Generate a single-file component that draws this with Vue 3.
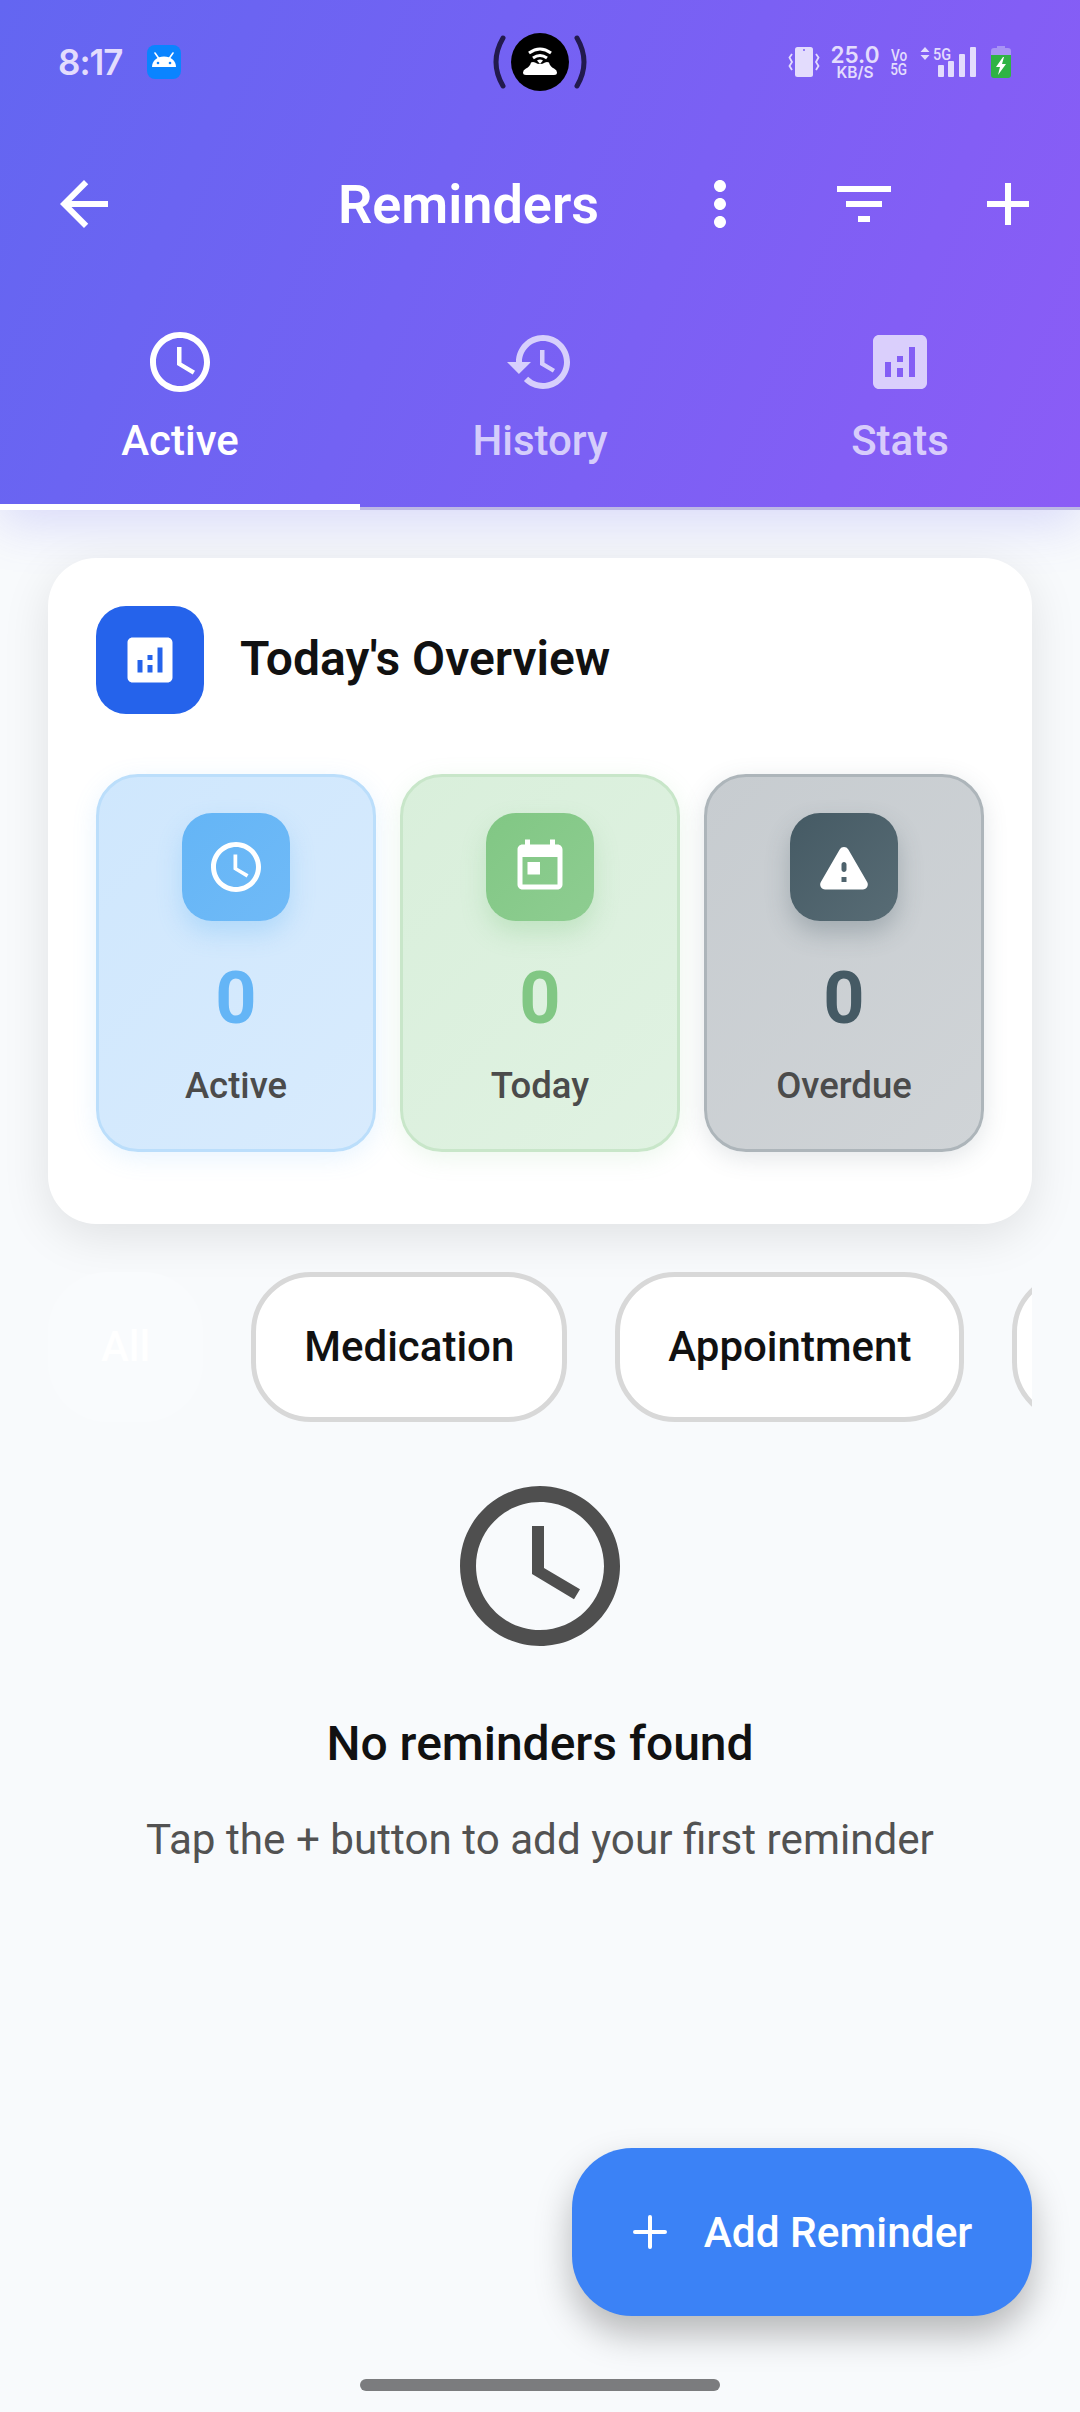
<template>
  <div class="page">
    <header class="top">
      <div class="status">
        <div class="status-left">
          <span class="clock">8:17</span>
          <svg class="droid" viewBox="0 0 34 34">
            <rect width="34" height="34" rx="8" fill="#0a84ff" />
            <path d="M8 8l3.5 5M26 8l-3.5 5" stroke="#fff" stroke-width="1.6" stroke-linecap="round" />
            <path d="M5 22c0-6 5-10.500 12-10.500S29 16 29 22z" fill="#fff" />
            <circle cx="11" cy="18" r="1.3" fill="#0a84ff" />
            <circle cx="23" cy="18" r="1.3" fill="#0a84ff" />
          </svg>
        </div>
        <svg class="cutout" viewBox="0 0 96 60">
          <path d="M11 6Q-3 30 11 54" fill="none" stroke="#221a4d" stroke-width="5" stroke-linecap="round" />
          <path d="M85 6Q99 30 85 54" fill="none" stroke="#221a4d" stroke-width="5" stroke-linecap="round" />
          <circle cx="48" cy="30" r="29" fill="#000" />
          <path d="M37 21q11-8 22 0M41 26q7-5 14 0" fill="none" stroke="#fff" stroke-width="3" />
          <path d="M45 28.500q3-2 6 0l-3 3.500z" fill="#fff" />
          <path d="M39 30.500q2-1 4 0q5 3 10 0q2-1 4 0q1 4 5 6q3 1.500 3 4q0 2.500-3 2.500H34q-3 0-3-2.500q0-2.500 3-4q4-2 5-6z" fill="#fff" />
        </svg>
        <div class="status-right">
          <svg class="vib" viewBox="0 0 32 30">
            <rect x="7" y="0" width="18" height="30" rx="2.500" fill="#e3dcfd" />
            <circle cx="16" cy="3" r="1" fill="#7a62f3" />
            <path d="M4 7L1.500 10.500 4 15 1.500 19 4 23M28 7l2.500 3.500L28 15l2.500 4L28 23" fill="none" stroke="#e3dcfd" stroke-width="1.800" />
          </svg>
          <div class="speed"><b>25.0</b><small>KB/S</small></div>
          <div class="volte"><span>Vo</span><span>5G</span></div>
          <div class="net">
            <svg class="updown" viewBox="0 0 10 13"><path d="M5 0l4.500 5H.5zM5 13L.5 8h9z" fill="#e3dcfd" /></svg>
            <span class="five">5G</span>
            <svg class="bars" viewBox="0 0 38 30">
              <rect x="0" y="18" width="6" height="12" rx="1" fill="#e3dcfd" />
              <rect x="10" y="14" width="6" height="16" rx="1" fill="#e3dcfd" />
              <rect x="21" y="7" width="6" height="23" rx="1" fill="#e3dcfd" />
              <rect x="32" y="0" width="6" height="30" rx="1" fill="#e3dcfd" />
            </svg>
          </div>
          <svg class="batt" viewBox="0 0 20 32">
            <path d="M6 0h8v2h3q3 0 3 3v5H0V5q0-3 3-3h3z" fill="#a893f5" />
            <path d="M0 9h20v20q0 3-3 3H3q-3 0-3-3z" fill="#2fb344" />
            <path d="M12 11L5 21h4l-2 8 8-11h-4l2-7z" fill="#fff" />
          </svg>
        </div>
      </div>

      <div class="appbar">
        <svg class="icon back" viewBox="0 0 24 24"><path :d="icons.back" /></svg>
        <span class="title">Reminders</span>
        <div class="actions">
          <button class="act"><svg class="icon" viewBox="0 0 24 24"><path :d="icons.more" /></svg></button>
          <button class="act"><svg class="icon" viewBox="0 0 24 24"><path :d="icons.filter" /></svg></button>
          <button class="act"><svg class="icon" viewBox="0 0 24 24"><path :d="icons.add" /></svg></button>
        </div>
      </div>

      <nav class="tabs">
        <div v-for="t in tabs" :key="t.label" class="tab" :class="{ on: t.on }">
          <svg class="icon" viewBox="0 0 24 24"><path :d="t.icon" /></svg>
          <span>{{ t.label }}</span>
        </div>
      </nav>
    </header>

    <main class="body">
      <section class="card">
        <div class="card-head">
          <div class="head-icon"><svg viewBox="0 0 24 24"><path :d="icons.stats" /></svg></div>
          <h2>Today's Overview</h2>
        </div>
        <div class="tiles">
          <div v-for="s in stats" :key="s.label" class="tile" :class="s.cls">
            <div class="tile-icon"><svg viewBox="0 0 24 24"><path :d="s.icon" /></svg></div>
            <div class="num">0</div>
            <div class="lbl">{{ s.label }}</div>
          </div>
        </div>
      </section>

      <div class="chips">
        <div v-for="c in chips" :key="c" class="chip" :class="{ sel: c === 'All' }">{{ c }}</div>
      </div>

      <div class="empty">
        <svg viewBox="0 0 24 24"><path :d="icons.clock" /></svg>
        <h3>No reminders found</h3>
        <p>Tap the + button to add your first reminder</p>
      </div>
    </main>

    <button class="fab">
      <svg viewBox="0 0 36 36"><path d="M18 3v30M3 18h30" stroke="#fff" stroke-width="4" stroke-linecap="round" /></svg>
      <span>Add Reminder</span>
    </button>
    <div class="home"></div>
  </div>
</template>

<script setup>
const icons = {
  back: 'M20 11H7.83l5.59-5.59L12 4l-8 8 8 8 1.41-1.41L7.83 13H20v-2z',
  more: 'M12 8c1.1 0 2-.9 2-2s-.9-2-2-2-2 .9-2 2 .9 2 2 2zm0 2c-1.1 0-2 .9-2 2s.9 2 2 2 2-.9 2-2-.9-2-2-2zm0 6c-1.1 0-2 .9-2 2s.9 2 2 2 2-.9 2-2-.9-2-2-2z',
  filter: 'M10 18h4v-2h-4v2zM3 6v2h18V6H3zm3 7h12v-2H6v2z',
  add: 'M19 13h-6v6h-2v-6H5v-2h6V5h2v6h6v2z',
  clock: 'M11.99 2C6.47 2 2 6.48 2 12s4.47 10 9.99 10C17.52 22 22 17.52 22 12S17.52 2 11.99 2zM12 20c-4.42 0-8-3.58-8-8s3.58-8 8-8 8 3.58 8 8-3.58 8-8 8zm.5-13H11v6l5.25 3.15.75-1.23-4.5-2.67z',
  history: 'M13 3c-4.97 0-9 4.03-9 9H1l3.89 3.89.07.14L9 12H6c0-3.87 3.13-7 7-7s7 3.13 7 7-3.13 7-7 7c-1.93 0-3.68-.79-4.94-2.06l-1.42 1.42C8.27 19.99 10.51 21 13 21c4.97 0 9-4.03 9-9s-4.03-9-9-9zm-1 5v5l4.28 2.54.72-1.21-3.5-2.08V8H12z',
  stats: 'M19 3H5c-1.1 0-2 .9-2 2v14c0 1.1.9 2 2 2h14c1.1 0 2-.9 2-2V5c0-1.1-.9-2-2-2zM9 17H7v-5h2v5zm4 0h-2v-3h2v3zm0-5h-2v-2h2v2zm4 5h-2V7h2v10z',
  today: 'M19 3h-1V1h-2v2H8V1H6v2H5c-1.11 0-1.99.9-1.99 2L3 19c0 1.1.89 2 2 2h14c1.1 0 2-.9 2-2V5c0-1.1-.9-2-2-2zm0 16H5V8h14v11zM7 10h5v5H7z',
  warn: 'M4.47 21h15.06c1.54 0 2.5-1.67 1.73-3L13.73 4.99c-.77-1.33-2.69-1.33-3.46 0L2.74 18c-.77 1.33.19 3 1.73 3zM12 14c-.55 0-1-.45-1-1v-2c0-.55.45-1 1-1s1 .45 1 1v2c0 .55-.45 1-1 1zm1 4h-2v-2h2v2z'
}

const tabs = [
  { label: 'Active', icon: icons.clock, on: true },
  { label: 'History', icon: icons.history },
  { label: 'Stats', icon: icons.stats }
]

const stats = [
  { label: 'Active', icon: icons.clock, cls: 'blue' },
  { label: 'Today', icon: icons.today, cls: 'green' },
  { label: 'Overdue', icon: icons.warn, cls: 'grey' }
]

const chips = ['All', 'Medication', 'Appointment', 'Exercise']
</script>

<style>
html, body {
  margin: 0;
  background: #f8fafc;
}
</style>

<style scoped>
.page {
  position: relative;
  width: 1080px;
  height: 2412px;
  overflow: hidden;
  background: #f8fafc;
  font-family: Roboto, "Liberation Sans", sans-serif;
  color: #111;
}
.top {
  background: linear-gradient(112deg, #6366f1, #8b5cf6);
  box-shadow: 0 12px 48px rgba(99, 102, 241, 0.22);
  color: #fff;
}

/* status bar */
.status {
  position: relative;
  height: 126px;
  display: flex;
  align-items: center;
  justify-content: space-between;
  padding: 0 69px 2px 58px;
  box-sizing: border-box;
  color: #e3dcfd;
}
.status-left {
  display: flex;
  align-items: center;
  gap: 24px;
}
.clock {
  font-family: Inter, Roboto, sans-serif;
  font-size: 35px;
  font-weight: 600;
  letter-spacing: -1px;
}
.droid {
  width: 34px;
  height: 34px;
}
.cutout {
  position: absolute;
  left: 492px;
  top: 32px;
  width: 96px;
  height: 60px;
}
.status-right {
  display: flex;
  align-items: center;
}
.vib {
  width: 32px;
  height: 30px;
}
.speed {
  width: 48px;
  margin-left: 11px;
  display: flex;
  flex-direction: column;
  align-items: center;
  font-family: Inter, Roboto, sans-serif;
  line-height: 1;
}
.speed b {
  font-size: 22.5px;
  font-weight: 600;
}
.speed small {
  font-size: 15.5px;
  font-weight: 600;
  margin-top: -2px;
  white-space: nowrap;
}
.volte {
  width: 16px;
  margin-left: 12px;
  display: flex;
  flex-direction: column;
  align-items: center;
  font-size: 17px;
  font-weight: 500;
  line-height: 14px;
}
.volte span {
  transform: scaleX(0.8);
}
.net {
  position: relative;
  width: 56px;
  height: 30px;
  margin-left: 13px;
  display: flex;
  justify-content: flex-end;
}
.updown {
  position: absolute;
  left: 0;
  top: 0;
  width: 10px;
  height: 13px;
}
.five {
  position: absolute;
  left: 13px;
  top: -3px;
  font-size: 17px;
  font-weight: 500;
  transform: scaleX(0.85);
  transform-origin: left center;
}
.bars {
  width: 38px;
  height: 30px;
}
.batt {
  width: 20px;
  height: 32px;
  margin-left: 15px;
}

/* app bar */
.appbar {
  height: 156px;
  display: flex;
  align-items: center;
  padding-left: 48px;
}
.icon {
  width: 72px;
  height: 72px;
  fill: currentColor;
  display: block;
}
.title {
  margin-left: 218px;
  font-size: 54px;
  font-weight: 600;
  flex: 1;
}
.actions {
  display: flex;
}
.act {
  width: 144px;
  height: 144px;
  padding: 36px;
  border: 0;
  background: none;
  color: #fff;
}

/* tabs */
.tabs {
  display: flex;
  height: 228px;
}
.tab {
  flex: 1;
  box-sizing: border-box;
  display: flex;
  flex-direction: column;
  align-items: center;
  padding-top: 44px;
  border-bottom: 3px solid #bdb8e4;
  color: rgba(255, 255, 255, 0.7);
  font-size: 42px;
  font-weight: 500;
  line-height: 48px;
}
.tab span {
  margin-top: 19px;
}
.tab.on {
  color: #fff;
  border-bottom: 6px solid #fff;
}

/* overview card */
.body {
  padding: 48px 48px 0;
}
.card {
  background: #fff;
  border-radius: 48px;
  padding: 48px 48px 72px;
  box-shadow: 0 12px 48px rgba(0, 0, 0, 0.1);
}
.card-head {
  display: flex;
  align-items: center;
  gap: 36px;
}
.head-icon {
  width: 108px;
  height: 108px;
  border-radius: 30px;
  background: #2563eb;
  display: flex;
  align-items: center;
  justify-content: center;
}
.head-icon svg {
  width: 60px;
  height: 60px;
  fill: #fff;
}
.card-head h2 {
  margin: 0 0 3px;
  font-size: 48px;
  font-weight: 600;
  color: #111;
}
.tiles {
  display: flex;
  gap: 24px;
  margin-top: 60px;
}
.tile {
  flex: 1;
  height: 378px;
  box-sizing: border-box;
  border: 3px solid;
  border-radius: 42px;
  padding-top: 36px;
  display: flex;
  flex-direction: column;
  align-items: center;
}
.tile-icon {
  width: 108px;
  height: 108px;
  border-radius: 30px;
  display: flex;
  align-items: center;
  justify-content: center;
}
.tile-icon svg {
  width: 60px;
  height: 60px;
  fill: #fff;
}
.num {
  margin-top: 36px;
  font-size: 72px;
  font-weight: 700;
  line-height: 84px;
}
.lbl {
  margin-top: 21px;
  font-size: 36.5px;
  font-weight: 500;
  line-height: 48px;
  color: #4b4b4b;
}
.blue {
  background: linear-gradient(135deg, #cfe7fd, #d8ebfd);
  border-color: #bbdefb;
  box-shadow: 0 6px 24px rgba(100, 181, 246, 0.15);
}
.blue .tile-icon {
  background: linear-gradient(135deg, #64b5f6, #70baf7);
  box-shadow: 0 12px 24px rgba(100, 181, 246, 0.3);
}
.blue .num {
  color: #64b5f6;
}
.green {
  background: linear-gradient(135deg, #d9efdb, #e0f2e2);
  border-color: #c8e6c9;
  box-shadow: 0 6px 24px rgba(129, 199, 132, 0.15);
}
.green .tile-icon {
  background: linear-gradient(135deg, #81c784, #8ecd91);
  box-shadow: 0 12px 24px rgba(129, 199, 132, 0.3);
}
.green .num {
  color: #81c784;
}
.grey {
  background: linear-gradient(135deg, #c7ccd0, #d0d4d7);
  border-color: #adb5ba;
  box-shadow: 0 6px 24px rgba(69, 90, 100, 0.15);
}
.grey .tile-icon {
  background: linear-gradient(135deg, #455a64, #586c75);
  box-shadow: 0 12px 24px rgba(69, 90, 100, 0.3);
}
.grey .num {
  color: #455a64;
}

/* filter chips */
.chips {
  display: flex;
  gap: 48px;
  margin-top: 48px;
  overflow: hidden;
}
.chip {
  flex: none;
  height: 150px;
  box-sizing: border-box;
  padding: 0 48px 2px;
  border: 5px solid #d8d8d8;
  border-radius: 60px;
  background: #fff;
  display: flex;
  align-items: center;
  font-size: 42px;
  font-weight: 500;
  color: #111;
}
.chip.sel {
  border-color: transparent;
  background: #f9fbfd;
  color: #fff;
}

/* empty state */
.empty {
  margin-top: 48px;
  display: flex;
  flex-direction: column;
  align-items: center;
}
.empty svg {
  width: 192px;
  height: 192px;
  fill: #4f4f4f;
}
.empty h3 {
  margin: 52px 0 0;
  font-size: 48px;
  font-weight: 500;
  line-height: 60px;
  color: #111;
}
.empty p {
  margin: 38px 0 0;
  font-size: 42.2px;
  line-height: 56px;
  color: #525252;
}

/* add button */
.fab {
  position: absolute;
  left: 572px;
  top: 2148px;
  width: 460px;
  height: 168px;
  border: 0;
  border-radius: 60px;
  background: #3b82f6;
  box-shadow: 0 18px 36px rgba(0, 0, 0, 0.27);
  display: flex;
  align-items: center;
  justify-content: center;
  gap: 36px;
  color: #fff;
  font-family: inherit;
  font-size: 42.4px;
  font-weight: 500;
}
.fab svg {
  width: 36px;
  height: 36px;
}
.home {
  position: absolute;
  left: 360px;
  top: 2379px;
  width: 360px;
  height: 12px;
  border-radius: 6px;
  background: #7b7c7e;
}
</style>
